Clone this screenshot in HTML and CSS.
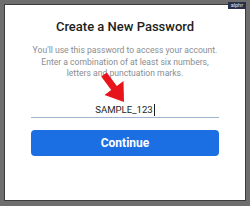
FILE: index.html
```html
<html lang="en">
<head>
  <meta charset="UTF-8">
  <meta name="viewport" content="width=device-width, initial-scale=1.0">
  <title>Create a New Password</title>
  <link rel="stylesheet" href="styles.css">
</head>
<body>
  <div class="frame">
    <div class="dialog">
      <h1>Create a New Password</h1>
      <p class="hint">You'll use this password to access your account.<br>Enter a combination of at least six numbers,<br>letters and punctuation marks.</p>
      <div class="field">
        <span class="value">SAMPLE_123</span><span class="caret"></span>
      </div>
      <button class="continue">Continue</button>
    </div>
    <svg class="arrow" width="30" height="34" viewBox="0 0 30 34">
      <path d="M4.2 6.6 L9.8 2.4 L19.8 15.9 L26.5 11 L27 32 L7.5 25 L14.2 20.1 Z" fill="#e8141b"/>
    </svg>
    <div class="badge">alphr</div>
  </div>
</body>
</html>
```
FILE: styles.css
```css
body {
  margin: 0;
  font-family: Roboto, "Liberation Sans", sans-serif;
  background-color: #4a4a4a;
}

.frame {
  position: relative;
  width: 250px;
  height: 206px;
  box-sizing: border-box;
  border: 4px solid #6e6e6e;
  border-bottom-width: 5px;
  background-color: #fff;
  box-shadow: inset 0 0 0 1px #3c3c3c;
}

.dialog {
  padding: 15px 27px 0;
  text-align: center;
}

.dialog h1 {
  margin: 0;
  font-size: 13px;
  font-weight: 500;
  color: #1c1e21;
  line-height: 16px;
}

.hint {
  margin: 10px -10px 0;
  font-size: 8.6px;
  line-height: 11.5px;
  color: #8a8d91;
  white-space: nowrap;
}

.field {
  margin-top: 23px;
  height: 14px;
  border-bottom: 1px solid #9fb3d0;
  font-size: 9.6px;
  line-height: 14px;
  color: #1c1e21;
  display: flex;
  justify-content: center;
}

.caret {
  display: inline-block;
  width: 1px;
  height: 12px;
  margin: 1px 0 0 1px;
  background-color: #1c1e21;
}

.continue {
  margin-top: 12px;
  width: 100%;
  height: 26px;
  border: none;
  border-radius: 4px;
  background-color: #1b6fe3;
  color: #fff;
  font-family: Roboto, "Liberation Sans", sans-serif;
  font-size: 12px;
  font-weight: 700;
}

.arrow {
  position: absolute;
  left: 93px;
  top: 66px;
}

.badge {
  position: absolute;
  right: 0;
  top: -2px;
  padding: 0 3px;
  height: 7px;
  line-height: 7px;
  font-size: 5.5px;
  color: #dfe3f0;
  background-color: #2a2f4a;
}
```
